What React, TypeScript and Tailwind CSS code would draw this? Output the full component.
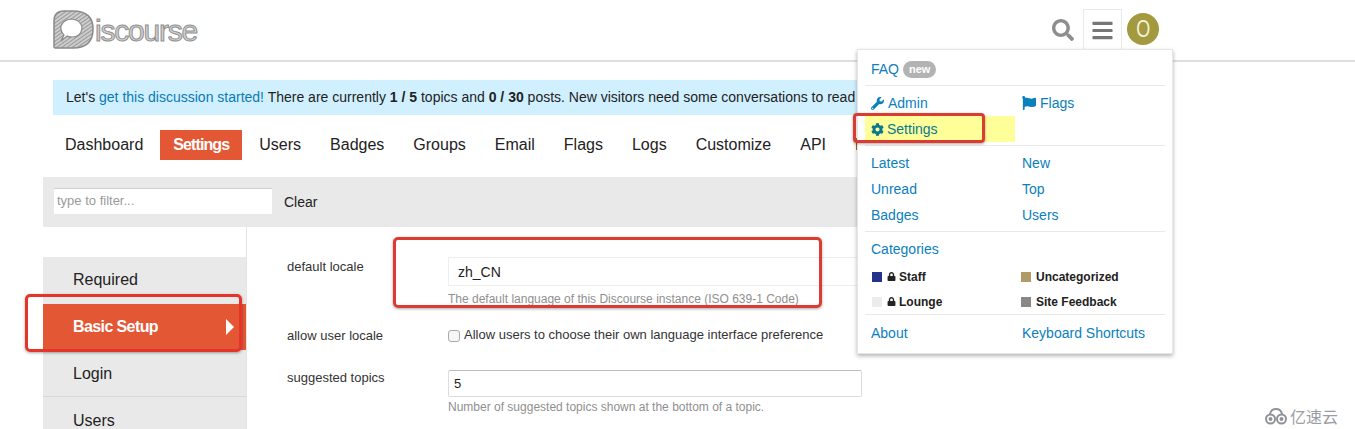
import React from 'react';
import { FaSearch, FaBars, FaWrench, FaFlag, FaCog, FaLock } from 'react-icons/fa';

const NAV = ['Dashboard', 'Settings', 'Users', 'Badges', 'Groups', 'Email', 'Flags', 'Logs', 'Customize', 'API', 'Plugins'];
const SECTIONS = ['Required', 'Basic Setup', 'Login', 'Users'];

const Logo = () => (
  <div className="flex items-start">
    <svg width="42" height="40" viewBox="0 0 42 40" className="shrink-0">
      <defs>
        <pattern id="hatch" width="3" height="3" patternUnits="userSpaceOnUse" patternTransform="rotate(-35)">
          <rect width="3" height="3" fill="#cdcdcd" />
          <rect width="3" height="1" fill="#989898" />
        </pattern>
      </defs>
      <path
        d="M1 38V12Q1 2 11 2H20Q40 2 40 20Q40 39 20 39H2Z"
        fill="url(#hatch)"
        stroke="#8a8a8a"
        strokeWidth="1.5"
      />
      <path
        d="M8 32L11 26Q7 22 8 17Q11 10 19 10Q28 11 29 19Q28 28 19 28Q15 28 14 27Z"
        fill="#fff"
        stroke="#8a8a8a"
        strokeWidth="1.200"
      />
    </svg>
    <span className="mt-[5px] text-[30px] leading-[34px] text-[#d2d2d2] tracking-[-1.2px] [-webkit-text-stroke:1px_#8f8f8f]">
      iscourse
    </span>
  </div>
);

const Header = () => (
  <header className="h-[62px] border-b-2 border-[#dedede] pl-[53px] pr-[196px] pt-[9px] flex items-start justify-between">
    <Logo />
    <div className="flex items-start">
      <FaSearch className="text-[#8e8e8e] text-[22px] mt-[10px]" />
      <div className="ml-[9px] w-[39px] h-[41px] border border-b-0 border-[#e9e9e9] flex items-center justify-center">
        <FaBars className="text-[#777] text-[23px]" />
      </div>
      <div className="ml-[5px] mt-[4px] w-[32px] h-[32px] rounded-full bg-[#a3993f] text-[#f4f1d8] text-[24px] leading-[32px] text-center">
        <span className="inline-block scale-x-[0.75]">O</span>
      </div>
    </div>
  </header>
);

const Banner = () => (
  <div className="mt-[18px] ml-[10px] h-[35px] bg-[#d1f0ff] pl-[13px] text-[14px] leading-[35px] text-[#222] whitespace-nowrap overflow-hidden">
    Let's <span className="text-[#0a7ab5]">get this discussion started!</span> There are currently <b>1 / 5</b> topics
    and <b>0 / 30</b> posts. New visitors need some conversations to read
  </div>
);

const AdminNav = () => (
  <nav className="mt-[15px] ml-[10px] flex gap-[5px] text-[16px] leading-[30px] text-[#222]">
    {NAV.map(item => (
      <span
        key={item}
        className={item === 'Settings' ? 'w-[82px] text-center bg-[#e45735] text-white font-bold tracking-[-0.9px]' : 'px-3'}
      >
        {item}
      </span>
    ))}
  </nav>
);

const FilterBar = () => (
  <div className="mt-[17px] h-[50px] bg-[#e9e9e9] pl-[11px] flex items-center">
    <div className="mb-[2px] w-[218px] h-[26px] bg-white border-t border-[#cfcfcf] pl-[3px] text-[13px] leading-[24px] text-[#9a9a9a]">
      type to filter...
    </div>
    <span className="ml-[12px] text-[14px] text-[#222]">Clear</span>
  </div>
);

const Sidebar = () => (
  <aside className="w-[204px] pt-[30px] border-r border-[#e4e4e4] shrink-0">
    <div className="bg-[#e9e9e9] text-[16px] text-[#222]">
      {SECTIONS.map(s => (
        <div
          key={s}
          className={
            s === 'Basic Setup'
              ? 'h-[46px] pl-[30px] pr-[12px] bg-[#e45735] text-white font-bold tracking-[-0.6px] flex items-center justify-between'
              : s === 'Login'
                ? 'h-[47px] pl-[30px] pt-[2px] flex items-center border-b border-[#d8d8d8]'
                : s === 'Required'
                  ? 'h-[47px] pl-[30px] pb-[2px] flex items-center'
                  : 'h-[47px] pl-[30px] flex items-center'
          }
        >
          {s}
          {s === 'Basic Setup' && <span className="w-0 h-0 border-y-[8px] border-l-[8px] border-y-transparent border-l-white" />}
        </div>
      ))}
    </div>
  </aside>
);

const Settings = () => (
  <section className="pl-[40px] pt-[30px] text-[13px] text-[#333] flex-1">
    <div className="grid grid-cols-[161px_414px]">
      <div className="pt-[1px] leading-[18px]">default locale</div>
      <div>
        <div className="h-[29px] bg-white border border-[#eeeeee] pl-[9px] text-[14px] leading-[28px] text-[#222]">zh_CN</div>
        <p className="mt-[5px] text-[12px] leading-[16px] text-[#8f8f8f]">The default language of this Discourse instance (ISO 639-1 Code)</p>
      </div>
      <div className="pt-[20px] leading-[18px]">allow user locale</div>
      <div className="pt-[19px] flex items-center h-[37px] text-[13px] text-[#333]">
        <span className="w-[12px] h-[12px] rounded-[3px] border border-[#a9a9a9] bg-[#f6f6f6] mr-[4px] mt-[1px]" />
        Allow users to choose their own language interface preference
      </div>
      <div className="pt-[24px] leading-[18px]">suggested topics</div>
      <div className="pt-[25px]">
        <div className="h-[27px] bg-white border border-[#dcdcdc] border-t-[#bdbdbd] rounded-[2px] pl-[5px] text-[13px] leading-[25px] text-[#222]">5</div>
        <p className="mt-[2px] text-[12px] leading-[16px] text-[#8f8f8f]">Number of suggested topics shown at the bottom of a topic.</p>
      </div>
    </div>
  </section>
);

const Divider = () => <div className="h-px bg-[#e9e9e9] -mx-[6px]" />;

const MenuRow = ({ left, right }: { left: React.ReactNode; right?: React.ReactNode }) => (
  <div className="grid grid-cols-[151px_1fr] h-[26px] items-center">
    <div>{left}</div>
    <div>{right}</div>
  </div>
);

const Category = ({ color, name, locked }: { color: string; name: string; locked?: boolean }) => (
  <div className="flex items-center pl-[1px] text-[12px] font-bold text-[#222]">
    <span className={`w-[10px] h-[10px] mr-[5px] ${color}`} />
    {locked && <FaLock className="text-[9px] mr-[3px]" />}
    {name}
  </div>
);

const HamburgerMenu = () => (
  <div className="absolute left-[857px] top-[49px] w-[316px] h-[305px] bg-white border border-[#e6e6e6] shadow-[0_2px_4px_rgba(0,0,0,0.3)] px-[13px] text-[14px] text-[#0a80bd]">
    <div className="h-[35px] flex items-center pt-[3px]">
      FAQ
      <span className="ml-[4px] h-[17px] px-[6px] rounded-full bg-[#b3b3b3] text-white text-[11px] leading-[17px] font-bold">new</span>
    </div>
    <Divider />
    <div className="pt-[4px] pb-[3px] relative">
      <MenuRow
        left={<span className="flex items-center gap-[4px]"><FaWrench className="text-[13px]" />Admin</span>}
        right={<span className="flex items-center gap-[4px]"><FaFlag className="text-[14px]" />Flags</span>}
      />
      <div className="h-[26px] w-[150px] -ml-[6px] pl-[6px] bg-[#ffff99] flex items-center gap-[3px] text-[#07788f]">
        <FaCog className="text-[13px]" />Settings
      </div>
    </div>
    <Divider />
    <div className="pt-[4px] pb-[3px]">
      <MenuRow left="Latest" right="New" />
      <MenuRow left="Unread" right="Top" />
      <MenuRow left="Badges" right="Users" />
    </div>
    <Divider />
    <div className="h-[32px] pt-[3px] flex items-center">Categories</div>
    <div>
      <div className="grid grid-cols-[149px_1fr] h-[25px] items-center">
        <Category color="bg-[#25328c]" name="Staff" locked />
        <Category color="bg-[#b09a66]" name="Uncategorized" />
      </div>
      <div className="grid grid-cols-[149px_1fr] h-[25px] items-center">
        <Category color="bg-[#ececec]" name="Lounge" locked />
        <Category color="bg-[#888888]" name="Site Feedback" />
      </div>
    </div>
    <Divider />
    <div className="pt-[5px]">
      <MenuRow left="About" right="Keyboard Shortcuts" />
    </div>
  </div>
);

const Watermark = () => (
  <div className="absolute left-[1264px] top-[407px] flex items-center text-[#9a9da3]">
    <svg width="24" height="18" viewBox="0 0 24 18" fill="none" stroke="#8f9298" strokeWidth="2">
      <path d="M6 7Q7 2 12 2Q17 2 18 7" />
      <circle cx="6.500" cy="12" r="4.500" />
      <circle cx="17.500" cy="12" r="4.500" />
      <circle cx="6.500" cy="12" r="1" />
      <circle cx="17.500" cy="12" r="1" />
    </svg>
    <span className="ml-[2px] text-[16px] leading-[18px] font-['Noto_Sans_CJK_SC']">亿速云</span>
  </div>
);

export default function App() {
  return (
    <div className="relative w-[1355px] h-[429px] overflow-hidden bg-white font-['Liberation_Sans','Noto_Sans_CJK_SC',sans-serif]">
      <Header />
      <main className="ml-[43px] w-[1117px]">
        <Banner />
        <AdminNav />
        <FilterBar />
        <div className="flex">
          <Sidebar />
          <Settings />
        </div>
      </main>

      <HamburgerMenu />

      {/* red marks drawn over the screenshot */}
      <div className="absolute left-[853px] top-[113px] w-[132px] h-[30px] border-[3px] border-[#dd3b2f] rounded-[4px] shadow-[0_1px_3px_rgba(0,0,0,0.35)]" />
      <div className="absolute left-[25px] top-[294px] w-[217px] h-[58px] border-[3px] border-[#e5352b] rounded-[5px] shadow-[0_1px_3px_rgba(0,0,0,0.35)]" />
      <div className="absolute left-[393px] top-[237px] w-[429px] h-[71px] border-[3px] border-[#dd3b2f] rounded-[5px] shadow-[0_1px_3px_rgba(0,0,0,0.35)]" />

      <Watermark />
    </div>
  );
}
